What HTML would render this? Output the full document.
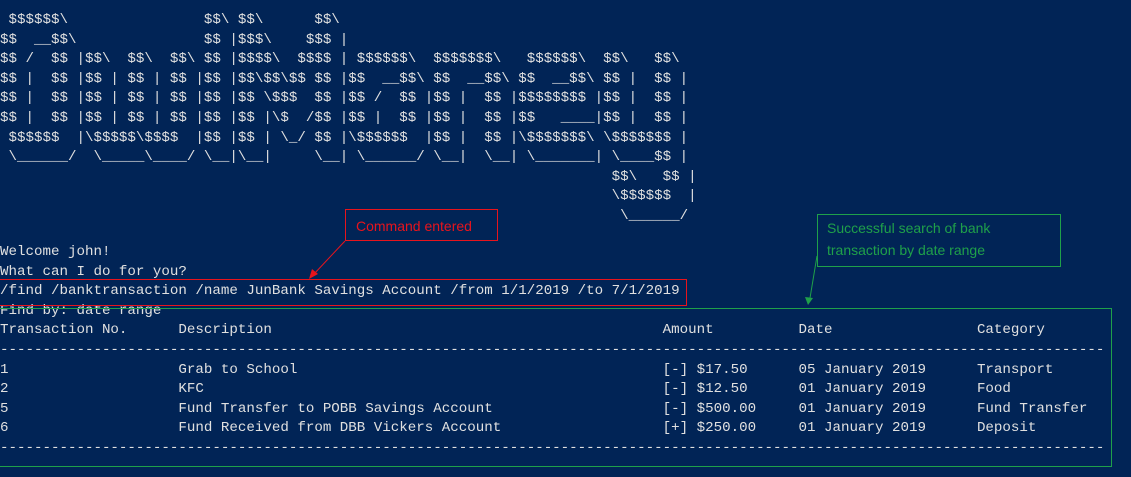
<!DOCTYPE html>
<html><head><meta charset="utf-8"><style>
html,body{margin:0;padding:0;background:#012456;width:1131px;height:477px;overflow:hidden;position:relative}
pre{position:absolute;left:0;margin:0;font-family:"Liberation Mono",monospace;font-size:14.17px;line-height:19.6px;color:#e0e0e0;white-space:pre}
.box{position:absolute;box-sizing:border-box}
.lbl{font-family:"Liberation Sans",sans-serif;font-size:14px;line-height:24px}
</style></head><body>
<pre style="top:11px"> $$$$$$\                $$\ $$\      $$\
$$  __$$\               $$ |$$$\    $$$ |
$$ /  $$ |$$\  $$\  $$\ $$ |$$$$\  $$$$ | $$$$$$\  $$$$$$$\   $$$$$$\  $$\   $$\
$$ |  $$ |$$ | $$ | $$ |$$ |$$\$$\$$ $$ |$$  __$$\ $$  __$$\ $$  __$$\ $$ |  $$ |
$$ |  $$ |$$ | $$ | $$ |$$ |$$ \$$$  $$ |$$ /  $$ |$$ |  $$ |$$$$$$$$ |$$ |  $$ |
$$ |  $$ |$$ | $$ | $$ |$$ |$$ |\$  /$$ |$$ |  $$ |$$ |  $$ |$$   ____|$$ |  $$ |
 $$$$$$  |\$$$$$\$$$$  |$$ |$$ | \_/ $$ |\$$$$$$  |$$ |  $$ |\$$$$$$$\ \$$$$$$$ |
 \______/  \_____\____/ \__|\__|     \__| \______/ \__|  \__| \_______| \____$$ |
                                                                        $$\   $$ |
                                                                        \$$$$$$  |
                                                                         \______/</pre>
<pre style="top:243px">Welcome john!
What can I do for you?
/find /banktransaction /name JunBank Savings Account /from 1/1/2019 /to 7/1/2019
Find by: date range
Transaction No.      Description                                              Amount          Date                 Category
----------------------------------------------------------------------------------------------------------------------------------
1                    Grab to School                                           [-] $17.50      05 January 2019      Transport
2                    KFC                                                      [-] $12.50      01 January 2019      Food
5                    Fund Transfer to POBB Savings Account                    [-] $500.00     01 January 2019      Fund Transfer
6                    Fund Received from DBB Vickers Account                   [+] $250.00     01 January 2019      Deposit
----------------------------------------------------------------------------------------------------------------------------------</pre>
<div class="box" style="left:-2px;top:279px;width:689px;height:27px;border:1px solid #e8141c"></div>
<div class="box lbl" style="left:345px;top:209px;width:153px;height:32px;border:1px solid #e8141c;color:#e8141c;padding:4px 0 0 10px">Command entered</div>
<div class="box" style="left:-2px;top:308px;width:1114px;height:159px;border:1px solid #1fa04a"></div>
<div class="box lbl" style="left:817px;top:214px;width:244px;height:53px;border:1px solid #1fa04a;color:#1fa04a;padding:2px 0 0 9px;line-height:22px">Successful search of bank<br>transaction by date range</div>
<svg style="position:absolute;left:0;top:0" width="1131" height="477">
<line x1="345" y1="241" x2="314" y2="274" stroke="#e8141c" stroke-width="1"/>
<polygon points="309,279 312,269 318,274" fill="#e8141c"/>
<line x1="817" y1="256" x2="810" y2="298" stroke="#1fa04a" stroke-width="1"/>
<polygon points="808,305 805,297 813,298" fill="#1fa04a"/>
</svg>
</body></html>
